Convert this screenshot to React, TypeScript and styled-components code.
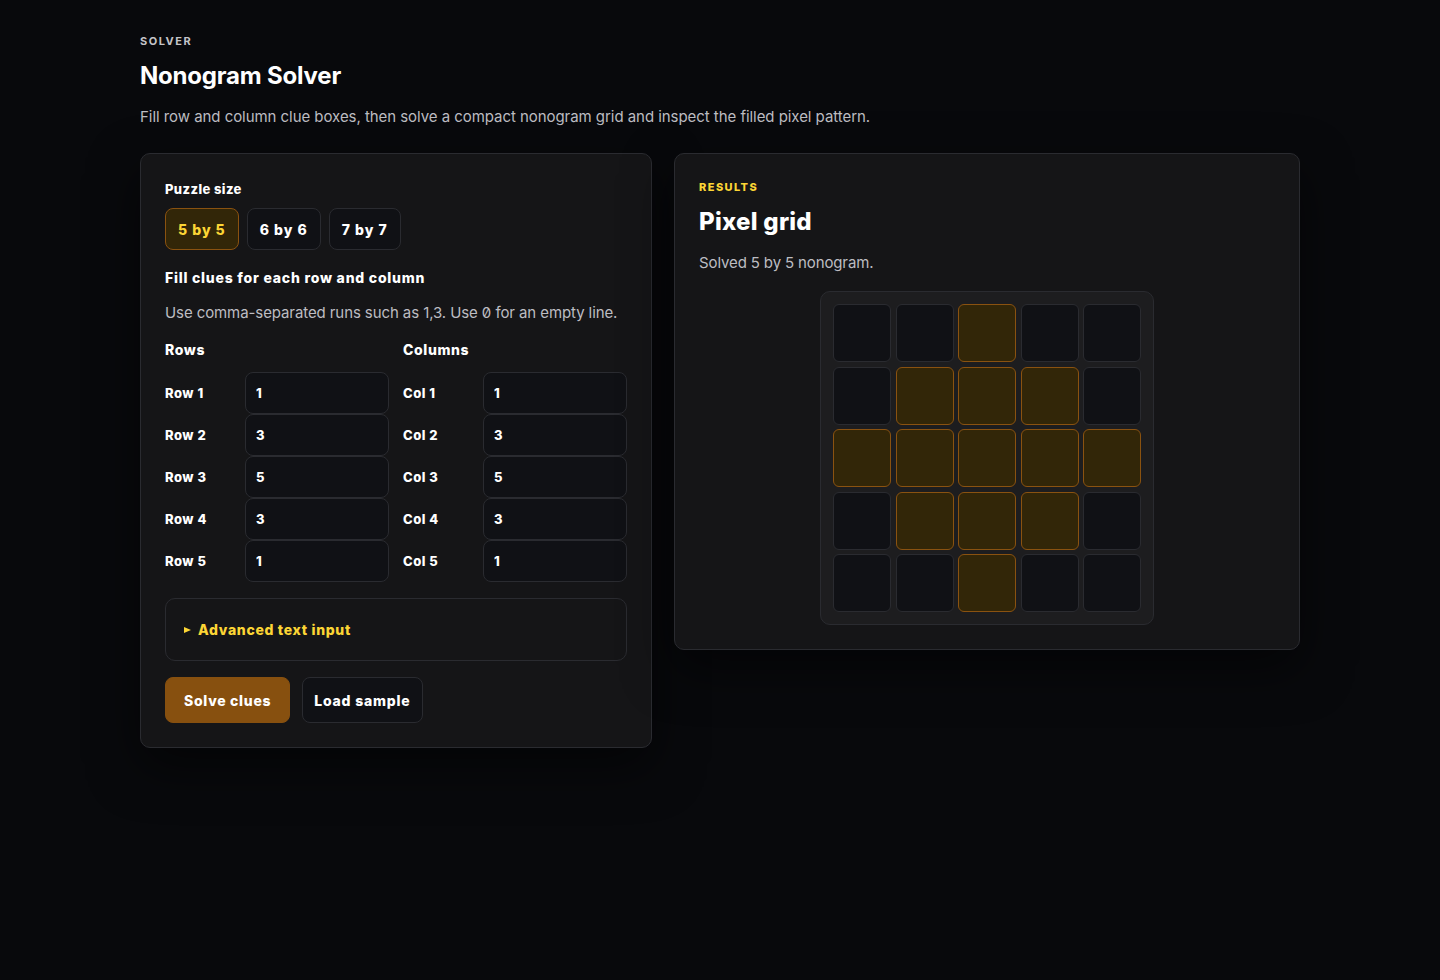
import styled, { createGlobalStyle } from "styled-components";

const filled = [
  [0, 0, 1, 0, 0],
  [0, 1, 1, 1, 0],
  [1, 1, 1, 1, 1],
  [0, 1, 1, 1, 0],
  [0, 0, 1, 0, 0],
];
const clues = ["1", "3", "5", "3", "1"];

const GlobalStyle = createGlobalStyle`
  html, body {
    margin: 0;
    min-height: 100%;
    background: #08090c;
  }
  body {
    font-family: Inter, "Liberation Sans", sans-serif;
    color: #fff;
  }
`;

export default function App() {
  return (
    <>
      <GlobalStyle />
      <Page>
        <Eyebrow>SOLVER</Eyebrow>
        <Title>Nonogram Solver</Title>
        <Lead>
          Fill row and column clue boxes, then solve a compact nonogram grid and inspect the filled pixel pattern.
        </Lead>
        <Columns>
          <Card>
            <FieldLabel>Puzzle size</FieldLabel>
            <SizeRow>
              <SizeButton $active>5 by 5</SizeButton>
              <SizeButton>6 by 6</SizeButton>
              <SizeButton>7 by 7</SizeButton>
            </SizeRow>
            <SectionTitle>Fill clues for each row and column</SectionTitle>
            <Hint>Use comma-separated runs such as 1,3. Use 0 for an empty line.</Hint>
            <ClueColumns>
              <ClueGroup title="Rows" prefix="Row" />
              <ClueGroup title="Columns" prefix="Col" />
            </ClueColumns>
            <Advanced>
              <summary>Advanced text input</summary>
            </Advanced>
            <Actions>
              <SolveButton>Solve clues</SolveButton>
              <SampleButton>Load sample</SampleButton>
            </Actions>
          </Card>
          <Card>
            <ResultEyebrow>RESULTS</ResultEyebrow>
            <ResultTitle>Pixel grid</ResultTitle>
            <Status>Solved 5 by 5 nonogram.</Status>
            <Board>
              {filled.flat().map((on, i) => (
                <Cell key={i} $on={on === 1} />
              ))}
            </Board>
          </Card>
        </Columns>
      </Page>
    </>
  );
}

function ClueGroup({ title, prefix }: { title: string; prefix: string }) {
  return (
    <div>
      <GroupTitle>{title}</GroupTitle>
      {clues.map((value, i) => (
        <ClueRow key={i}>
          <ClueLabel>
            {prefix} {i + 1}
          </ClueLabel>
          <ClueInput defaultValue={value} />
        </ClueRow>
      ))}
    </div>
  );
}

const Page = styled.main`
  box-sizing: border-box;
  width: 1160px;
  min-height: 980px;
  margin: 0 auto;
  padding-top: 34px;
`;

const Eyebrow = styled.div`
  font-size: 11px;
  line-height: 14px;
  font-weight: 700;
  letter-spacing: 1.5px;
  color: #c4c4c8;
`;

const Title = styled.h1`
  margin: 12px 0 0;
  font-size: 24px;
  line-height: 32px;
  font-weight: 700;
  letter-spacing: -0.2px;
`;

const Lead = styled.p`
  margin: 14px 0 0;
  font-size: 15px;
  line-height: 22px;
  letter-spacing: -0.05px;
  color: #bdbdc2;
`;

const Columns = styled.div`
  display: grid;
  grid-template-columns: 0.9fr 1.1fr;
  gap: 22px;
  align-items: start;
  margin-top: 25px;
`;

const Card = styled.section`
  box-sizing: border-box;
  padding: 24px;
  background: #151517;
  border: 1px solid #2a2b30;
  border-radius: 10px;
  box-shadow: 0 18px 50px rgba(0, 0, 0, 0.55);
`;

const FieldLabel = styled.div`
  font-size: 13px;
  line-height: 22px;
  font-weight: 800;
  letter-spacing: 0.4px;
`;

const SizeRow = styled.div`
  display: flex;
  gap: 8px;
  margin-top: 8px;
`;

const ControlButton = styled.button`
  box-sizing: border-box;
  font-family: inherit;
  font-size: 14px;
  font-weight: 800;
  color: #fff;
  background: #101115;
  border: 1px solid #2a2b30;
  border-radius: 8px;
`;

const SizeButton = styled(ControlButton)<{ $active?: boolean }>`
  height: 42px;
  padding: 0 12px;
  letter-spacing: 1px;
  color: ${(p) => (p.$active ? "#fcd535" : "#fff")};
  background: ${(p) => (p.$active ? "#322608" : "#101115")};
  border-color: ${(p) => (p.$active ? "#8a5210" : "#2a2b30")};
`;

const SectionTitle = styled.h2`
  margin: 17px 0 0;
  font-size: 14px;
  line-height: 22px;
  font-weight: 800;
  letter-spacing: 0.77px;
`;

const Hint = styled.p`
  margin: 13px 0 0;
  font-size: 15px;
  line-height: 22px;
  letter-spacing: -0.09px;
  color: #bdbdc2;
  font-feature-settings: "zero";
`;

const ClueColumns = styled.div`
  display: grid;
  grid-template-columns: 1fr 1fr;
  gap: 14px;
  margin-top: 15px;
`;

const GroupTitle = styled.div`
  font-size: 14px;
  line-height: 22px;
  font-weight: 800;
  letter-spacing: 0.6px;
  margin-bottom: 11px;
`;

const ClueRow = styled.label`
  display: grid;
  grid-template-columns: 80px 1fr;
  align-items: center;
`;

const ClueLabel = styled.span`
  font-size: 13px;
  font-weight: 800;
  letter-spacing: 0.5px;
`;

const ClueInput = styled.input`
  box-sizing: border-box;
  width: 100%;
  height: 42px;
  padding: 0 10px;
  font-family: inherit;
  font-size: 13px;
  font-weight: 800;
  color: #fff;
  background: #101115;
  border: 1px solid #2a2b30;
  border-radius: 8px;
  outline: none;
`;

const Advanced = styled.details`
  box-sizing: border-box;
  height: 63px;
  margin-top: 16px;
  padding: 20px 18px;
  border: 1px solid #2a2b30;
  border-radius: 10px;
  summary {
    display: flex;
    align-items: center;
    list-style: none;
    font-size: 14px;
    line-height: 22px;
    font-weight: 800;
    letter-spacing: 0.68px;
    color: #fcd535;
  }
  summary::before {
    content: "";
    margin-right: 7px;
    border-left: 7px solid #fcd535;
    border-top: 3.5px solid transparent;
    border-bottom: 3.5px solid transparent;
  }
`;

const Actions = styled.div`
  display: flex;
  gap: 12px;
  margin-top: 16px;
`;

const SolveButton = styled(ControlButton)`
  height: 46px;
  padding: 0 18px;
  letter-spacing: 0.7px;
  background: #87500f;
  border-color: #87500f;
`;

const SampleButton = styled(ControlButton)`
  height: 46px;
  padding: 0 11px;
  letter-spacing: 0.8px;
`;

const ResultEyebrow = styled.div`
  font-size: 11px;
  line-height: 18px;
  font-weight: 800;
  letter-spacing: 1.4px;
  color: #fcd535;
`;

const ResultTitle = styled.h2`
  margin: 10px 0 0;
  font-size: 24px;
  line-height: 32px;
  font-weight: 800;
  letter-spacing: 0.25px;
`;

const Status = styled.p`
  margin: 14px 0 0;
  font-size: 15px;
  line-height: 22px;
  letter-spacing: -0.13px;
  color: #bdbdc2;
`;

const Board = styled.div`
  display: grid;
  grid-template-columns: repeat(5, 58px);
  grid-auto-rows: 58px;
  gap: 4.5px;
  width: fit-content;
  margin: 17px auto 0;
  padding: 12px;
  background: #1d1d1f;
  border: 1px solid #2a2b30;
  border-radius: 10px;
`;

const Cell = styled.div<{ $on: boolean }>`
  box-sizing: border-box;
  background: ${(p) => (p.$on ? "#322608" : "#101115")};
  border: 1px solid ${(p) => (p.$on ? "#8a5210" : "#2a2b30")};
  border-radius: 6px;
`;
